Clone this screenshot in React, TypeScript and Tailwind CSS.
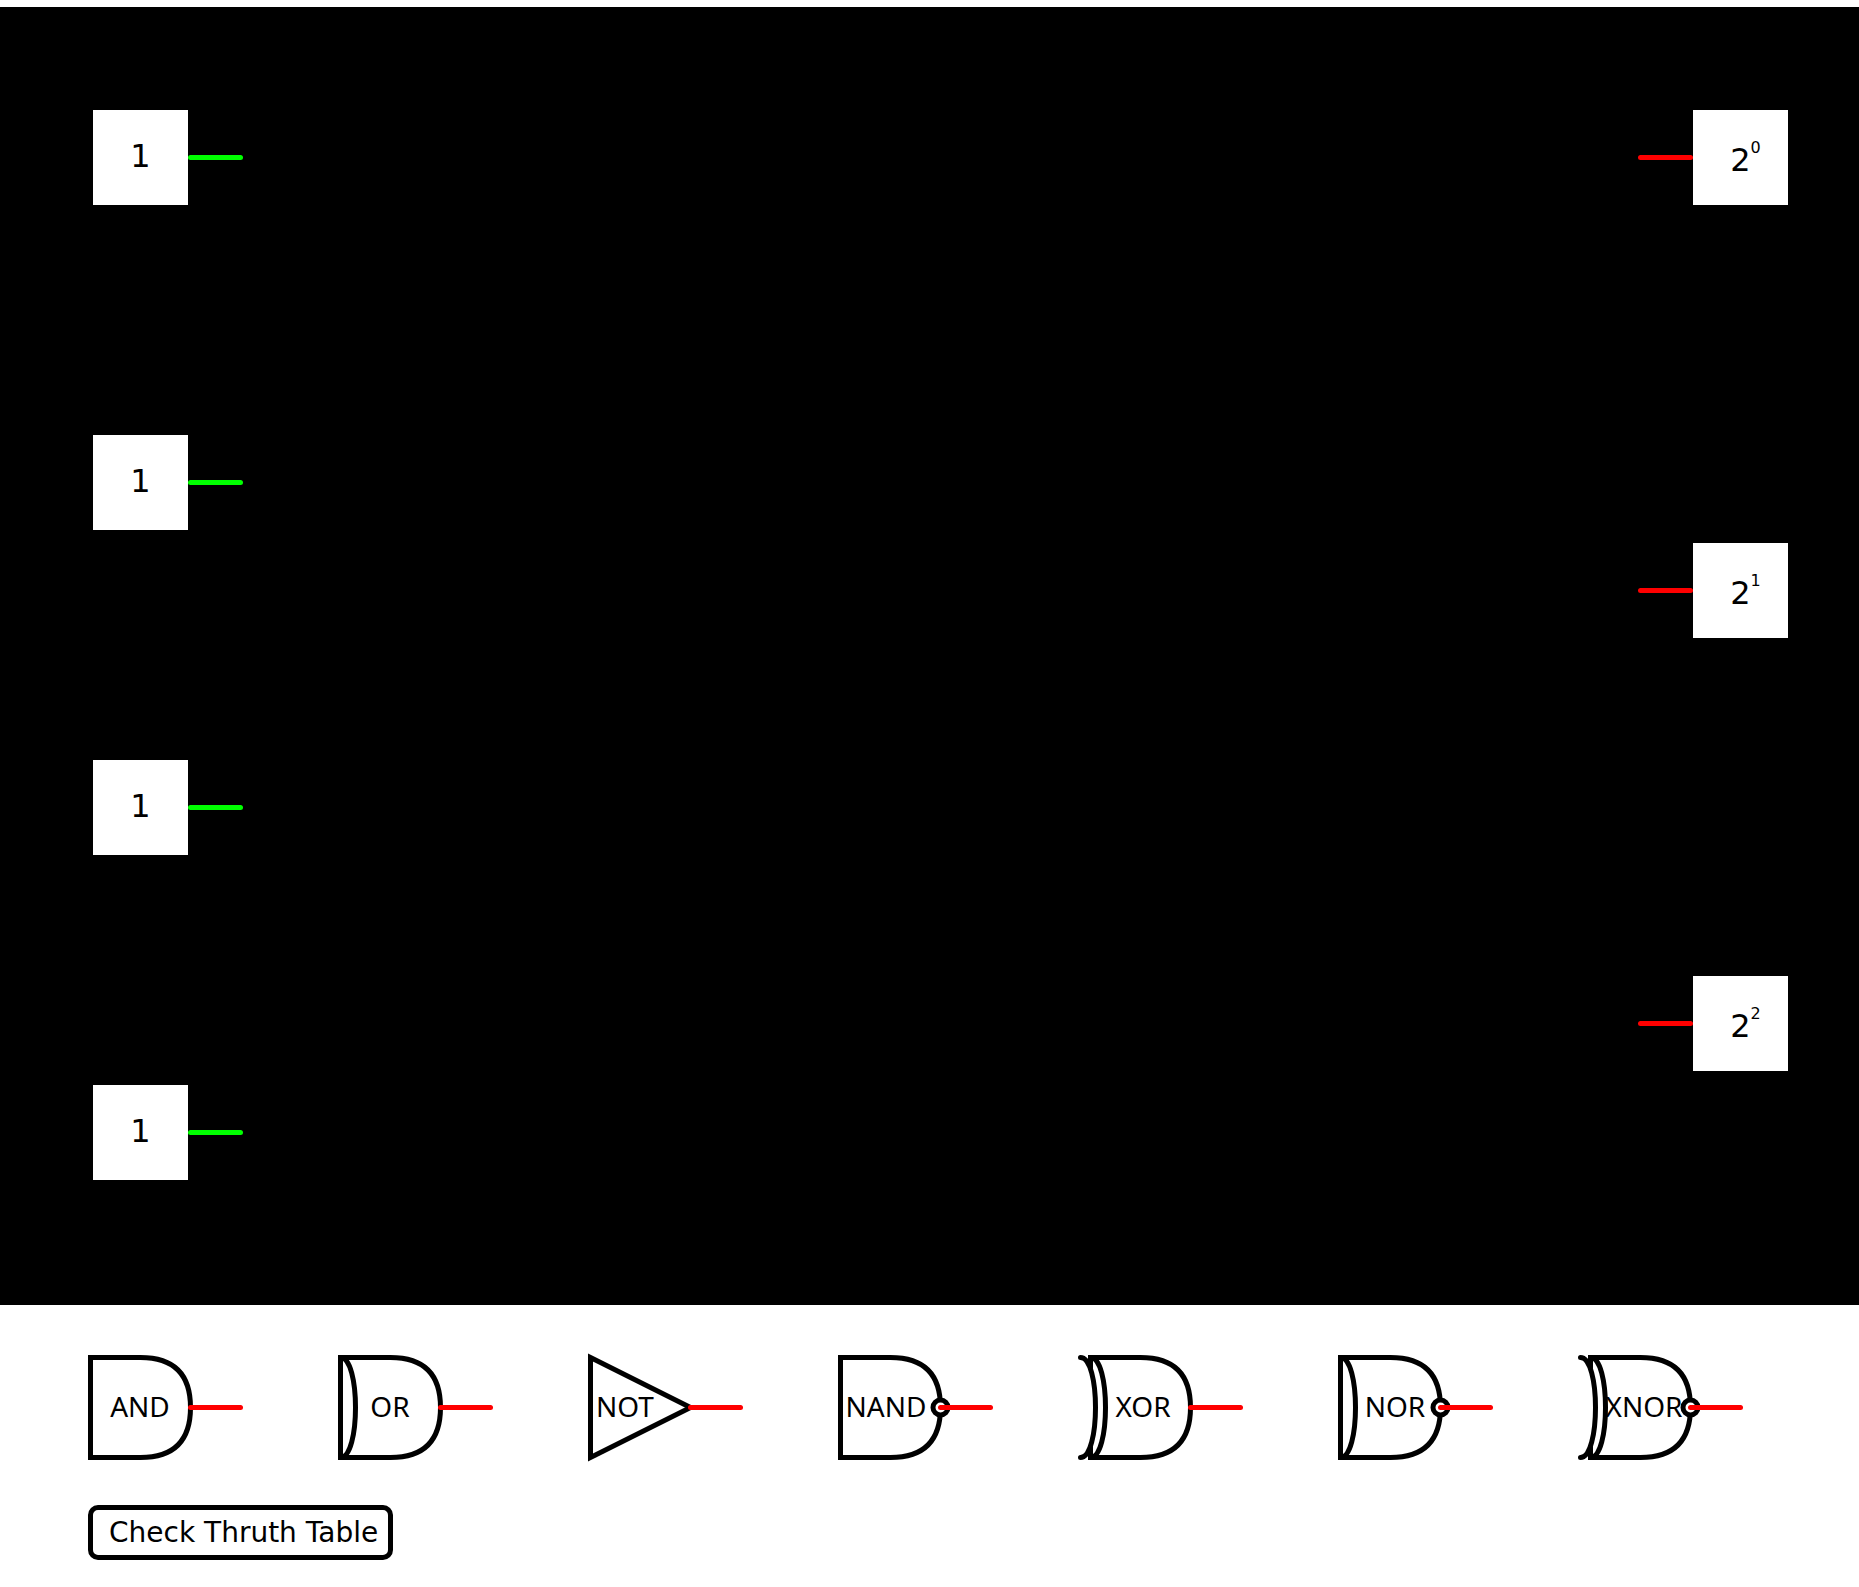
type Gate = {
  name: string;
  labelX: number;
  curvedBack?: boolean;
  exclusive?: boolean;
  inverted?: boolean;
  triangle?: boolean;
};

const GATES: Gate[] = [
  { name: "AND", labelX: 52 },
  { name: "OR", labelX: 52, curvedBack: true },
  { name: "NOT", labelX: 37, triangle: true },
  { name: "NAND", labelX: 48, inverted: true },
  { name: "XOR", labelX: 55, curvedBack: true, exclusive: true },
  { name: "NOR", labelX: 57, curvedBack: true, inverted: true },
  { name: "XNOR", labelX: 56, curvedBack: true, exclusive: true, inverted: true },
];

const INPUTS = ["1", "1", "1", "1"];
const OUTPUTS = ["0", "1", "2"];

function GateButton({ gate }: { gate: Gate }) {
  return (
    <button type="button" aria-label={`${gate.name} gate`} className="block shrink-0">
      <svg viewBox="0 0 155 105" className="block h-[105px] w-[155px] overflow-visible">
        <g fill="none" stroke="black" strokeWidth="5">
          {gate.triangle ? (
            <path d="M2.5 2.5 L102.5 52.5 L2.5 102.5 Z" />
          ) : (
            <path d="M52.5 2.5 H2.5 V102.5 H52.5 Q102.5 102.5 102.5 52.5 Q102.5 2.5 52.5 2.5 Z" />
          )}
          {gate.curvedBack && <path d="M2.5 2.5 C22.5 2.5 22.5 102.5 2.5 102.5" />}
          {gate.exclusive && (
            <path d="M-7.5 2.5 C12.5 2.5 12.5 102.5 -7.5 102.5" fill="white" strokeLinecap="round" />
          )}
        </g>
        <text x={gate.labelX} y="62" textAnchor="middle" className="fill-black font-['Noto_Sans',sans-serif] text-[28px]">
          {gate.name}
        </text>
        {gate.inverted && <circle cx="102.5" cy="52.5" r="7.5" fill="white" stroke="black" strokeWidth="5" />}
        <path d="M102.5 52.5 H152.5" stroke="#ff0000" strokeWidth="5" strokeLinecap="round" />
      </svg>
    </button>
  );
}

export default function App() {
  return (
    <div className="bg-white pt-[7px] text-black">
      <main className="flex h-[1298px] justify-between bg-black pt-[103px] pr-[71px] pl-[93px] font-['DejaVu_Sans',sans-serif]">
        <div className="flex flex-col justify-between pb-[125px]">
          {INPUTS.map((value, i) => (
            <div key={i} className="flex items-center">
              <button type="button" aria-label={`Input ${i + 1}`} className="size-[95px] bg-white pb-1 text-[32px] leading-none">
                {value}
              </button>
              <span className="h-[5px] w-[55px] rounded-full bg-[#00ff00]" />
            </div>
          ))}
        </div>
        <div className="flex flex-col justify-between pb-[234px]">
          {OUTPUTS.map((power) => (
            <div key={power} className="flex items-center">
              <span className="h-[5px] w-[55px] rounded-full bg-[#ff0000]" />
              <div className="flex size-[95px] items-center justify-center bg-white pt-1 pl-2.5 text-[32px] leading-none">
                2<sup className="-top-3 text-base leading-none">{power}</sup>
              </div>
            </div>
          ))}
        </div>
      </main>
      <footer className="pt-[50px] pr-[116px] pb-[27px] pl-[88px]">
        <div className="flex justify-between">
          {GATES.map((gate) => (
            <GateButton key={gate.name} gate={gate} />
          ))}
        </div>
        <button
          type="button"
          className="mt-[45px] block h-[55px] rounded-[10px] border-5 border-black pr-2.5 pl-4 font-['DejaVu_Sans',sans-serif] text-[28px] leading-none"
        >
          Check Thruth Table
        </button>
      </footer>
    </div>
  );
}
